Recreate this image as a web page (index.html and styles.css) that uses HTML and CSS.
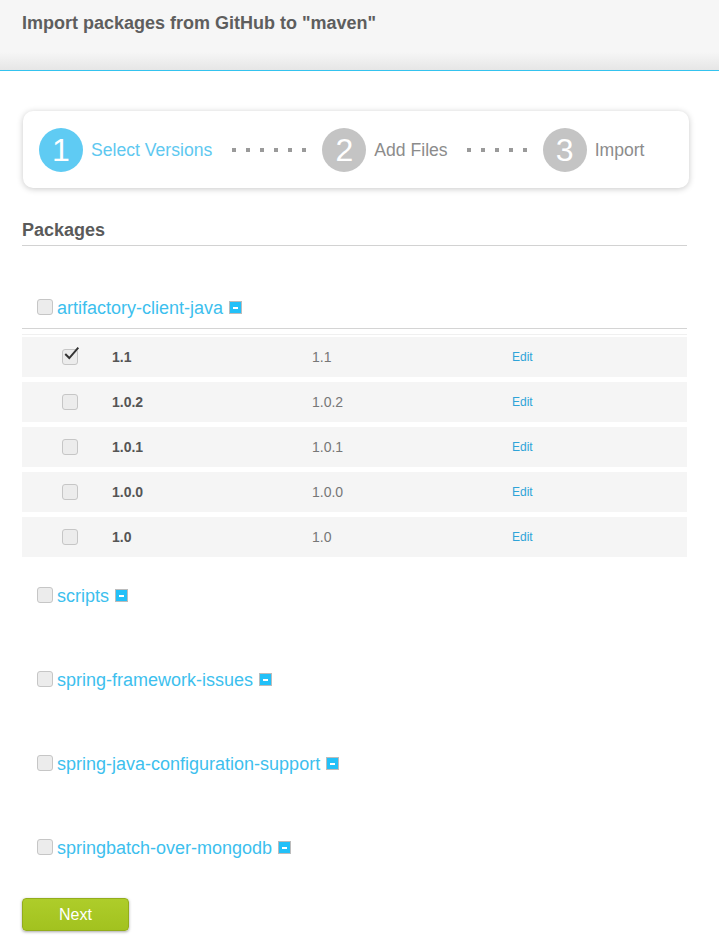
FILE: index.html
```html
<!DOCTYPE html>
<html>
<head>
<meta charset="utf-8">
<title>Import packages</title>
<link rel="stylesheet" href="styles.css">
</head>
<body>
<header class="topbar">
  <h1 class="title">Import packages from GitHub to "maven"</h1>
</header>
<main class="content">
  <div class="wizard">
    <div class="step active"><span class="num">1</span><span class="label">Select Versions</span></div>
    <div class="dots dots-6"><i></i><i></i><i></i><i></i><i></i><i></i></div>
    <div class="step"><span class="num">2</span><span class="label">Add Files</span></div>
    <div class="dots dots-5"><i></i><i></i><i></i><i></i><i></i></div>
    <div class="step"><span class="num">3</span><span class="label">Import</span></div>
  </div>

  <h2 class="section-title">Packages</h2>

  <div class="pkg-list">
    <div class="pkg">
      <div class="pkg-head">
        <span class="cb"></span>
        <a class="pkg-name">artifactory-client-java</a>
        <span class="toggle"></span>
      </div>
      <div class="pkg-body">
        <div class="versions">
          <div class="vrow"><span class="cb-cell"><span class="cb checked"><svg viewBox="0 0 20 20" class="check"><polyline points="2.5,10 7,14.5 17,3" /></svg></span></span><span class="vname">1.1</span><span class="vval">1.1</span><a class="edit">Edit</a></div>
          <div class="vrow"><span class="cb-cell"><span class="cb"></span></span><span class="vname">1.0.2</span><span class="vval">1.0.2</span><a class="edit">Edit</a></div>
          <div class="vrow"><span class="cb-cell"><span class="cb"></span></span><span class="vname">1.0.1</span><span class="vval">1.0.1</span><a class="edit">Edit</a></div>
          <div class="vrow"><span class="cb-cell"><span class="cb"></span></span><span class="vname">1.0.0</span><span class="vval">1.0.0</span><a class="edit">Edit</a></div>
          <div class="vrow"><span class="cb-cell"><span class="cb"></span></span><span class="vname">1.0</span><span class="vval">1.0</span><a class="edit">Edit</a></div>
        </div>
      </div>
    </div>
    <div class="pkg">
      <div class="pkg-head"><span class="cb"></span><a class="pkg-name">scripts</a><span class="toggle"></span></div>
      <div class="pkg-empty"></div>
    </div>
    <div class="pkg">
      <div class="pkg-head"><span class="cb"></span><a class="pkg-name">spring-framework-issues</a><span class="toggle"></span></div>
      <div class="pkg-empty"></div>
    </div>
    <div class="pkg">
      <div class="pkg-head"><span class="cb"></span><a class="pkg-name">spring-java-configuration-support</a><span class="toggle"></span></div>
      <div class="pkg-empty"></div>
    </div>
    <div class="pkg">
      <div class="pkg-head"><span class="cb"></span><a class="pkg-name">springbatch-over-mongodb</a><span class="toggle"></span></div>
      <div class="pkg-empty"></div>
    </div>
  </div>

  <button class="next-btn">Next</button>
</main>
</body>
</html>
```

FILE: styles.css
```css
* { box-sizing: border-box; }
html, body { margin: 0; padding: 0; background: #fff; }
body {
  font-family: "Liberation Sans", Arial, sans-serif;
  color: #5a5a5a;
  width: 719px;
}

.topbar {
  height: 71px;
  background: linear-gradient(to bottom, #f6f6f6 0, #f6f6f6 52px, #e6e6e6 70px);
  border-bottom: 1px solid #34c3ef;
  padding: 13px 22px 0;
}
.title {
  margin: 0;
  font-size: 18px;
  line-height: 21px;
  font-weight: bold;
  color: #5e5e5e;
}

.content {
  padding: 40px 32px 20px 22px;
}

.wizard {
  margin: 0 -2px 0 1px;
  height: 77px;
  border-radius: 10px;
  background: #fff;
  box-shadow: 0 1px 6px rgba(0,0,0,0.22);
  display: flex;
  align-items: center;
  padding-left: 16px;
}
.step { display: flex; align-items: center; gap: 8px; }
.step .num {
  width: 44px; height: 44px; border-radius: 50%;
  background: #c4c4c4; color: #fff;
  display: flex; align-items: center; justify-content: center;
  font-size: 32px; line-height: 1;
  padding-top: 1px;
}
.step .label { font-size: 17.6px; color: #8c8c8c; padding-top: 2px; }
.step.active .num { background: #5fcbf3; }
.step.active .label { color: #5ec8f0; }

.dots { display: flex; gap: 10px; margin: 0 16px 0 20px; padding-top: 1px; }
.dots i { display: block; width: 4px; height: 4px; background: #9a9a9a; }
.dots-5 { margin-left: 19px; }

.section-title {
  margin: 32px 0 0;
  font-size: 18px;
  line-height: 21px;
  font-weight: bold;
  color: #5a5a5a;
  padding-bottom: 4px;
  border-bottom: 1px solid #d2d2d2;
}

.pkg-list { padding-top: 23px; }
.pkg { padding-top: 28px; }
.pkg-head {
  height: 22px;
  display: flex;
  align-items: center;
  padding-left: 15px;
}
.pkg-head .cb { margin-top: -2px; }
.pkg-name {
  margin-left: 4px;
  font-size: 18px;
  line-height: 22px;
  color: #3dbfee;
  text-decoration: none;
}
.toggle {
  position: relative;
  width: 13px; height: 13px;
  margin-left: 6px;
  margin-top: -1px;
  background: #22c0f8;
  border: 1px solid #bcbcbc;
}
.toggle::after {
  content: "";
  position: absolute;
  left: 3px; top: 4.5px;
  width: 5px; height: 2px;
  background: #fff;
}

.cb {
  position: relative;
  display: inline-block;
  width: 16px; height: 16px;
  background: #ececec;
  border: 1px solid #c6c6c6;
  border-radius: 3px;
  flex: none;
}
.check {
  position: absolute;
  left: 0; top: -5px;
  width: 18px; height: 18px;
  fill: none;
  stroke: #333;
  stroke-width: 2.2;
}

.pkg-body {
  margin-top: 9px;
  border-top: 1px solid #d4d4d4;
}
.versions {
  margin-top: 5px;
  border-top: 1px solid #f0f0f0;
  padding-top: 2px;
  display: flex;
  flex-direction: column;
  gap: 5px;
}
.vrow {
  height: 40px;
  background: #f5f5f5;
  display: grid;
  grid-template-columns: 90px 200px 200px 1fr;
  align-items: center;
  font-size: 14px;
}
.cb-cell { padding-left: 40px; display: flex; align-items: center; }
.vname { font-weight: bold; color: #555; }
.vval { color: #777; }
.edit { font-size: 12px; color: #2fa4d8; text-decoration: none; }

.pkg-empty { height: 34px; }

.next-btn {
  margin-top: 5px;
  width: 107px; height: 33px;
  border: 1px solid #93ad1c;
  border-radius: 4px;
  background: linear-gradient(to bottom, #aecd2a, #a2c21f);
  box-shadow: 0 1px 3px rgba(0,0,0,0.35);
  color: #fff;
  font-family: "Liberation Sans", Arial, sans-serif;
  font-size: 16px;
  padding: 0;
}
```
